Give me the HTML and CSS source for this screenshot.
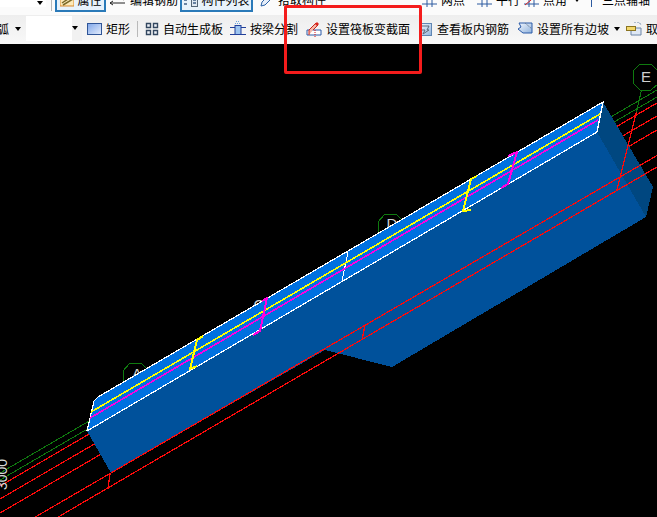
FILE: index.html
```html
<!DOCTYPE html>
<html lang="zh">
<head>
<meta charset="utf-8">
<title>设置筏板变截面</title>
<link rel="stylesheet" href="styles.css">
</head>
<body>
<div class="page">
  <svg class="defs" width="0" height="0" aria-hidden="true">
    <defs>
      <linearGradient id="rectFill" x1="0" y1="0" x2="1" y2="1"><stop offset="0" stop-color="#7ea6ea"/><stop offset="1" stop-color="#e6eefc"/></linearGradient>
      <linearGradient id="sheet" x1="0" y1="0" x2="1" y2="1"><stop offset="0" stop-color="#f4f8fe"/><stop offset="1" stop-color="#8fb2dc"/></linearGradient>
    </defs>
  </svg>
  <div class="toolbar-top">
    <div class="combo-top"><span class="caret"></span></div>
    <span class="sep sep-top"></span>
    <div class="tool tool-btn btn-prop">
      <svg class="ico" width="14" height="14" viewBox="0 0 14 14"><rect x="0" y="1" width="14" height="12" fill="#fde9b8" stroke="#d98a2b"/><path d="M2 10 L11 4 M3 12 L13 6" stroke="#7a6a2a" stroke-width="1.5"/></svg>
      <span>属性</span>
    </div>
    <div class="tool tool-edit">
      <svg class="ico" width="16" height="14" viewBox="0 0 16 14"><path d="M0 10 H15 M3 8 L0 10 L3 12 M6 5 H16 M13 3 L16 5 L13 7" fill="none" stroke="#222"/></svg>
      <span>编辑钢筋</span>
    </div>
    <div class="tool tool-btn btn-list">
      <svg class="ico" width="14" height="14" viewBox="0 0 14 14"><rect x="7.5" y="0.5" width="6" height="13" fill="#dfe8f2" stroke="#567"/><path d="M0 3 H3 M0 7 H3 M0 11 H3 M9 4 H12 M9 7 H12 M9 10 H12" stroke="#3f5f86" stroke-width="1.5"/></svg>
      <span>构件列表</span>
    </div>
    <div class="tool tool-pick">
      <svg class="ico" width="14" height="14" viewBox="0 0 14 14"><path d="M1 13 L2 9 L10 1 L13 4 L5 12 Z" fill="#e7eef8" stroke="#2c62a8"/></svg>
      <span>拾取构件</span>
    </div>
    <div class="tool tool-two">
      <svg class="ico" width="15" height="14" viewBox="0 0 15 14"><path d="M0 5 H15 M0 11 H15 M5 0 V14 M10 0 V14" stroke="#2c5aa0"/><rect x="3" y="0" width="3" height="3" fill="#2a8a2a"/></svg>
      <span>两点</span>
    </div>
    <div class="tool tool-par">
      <svg class="ico" width="15" height="14" viewBox="0 0 15 14"><path d="M0 5 H15 M0 11 H15 M5 0 V14 M10 0 V14" stroke="#2c5aa0"/></svg>
      <span>平行</span>
    </div>
    <div class="tool tool-ang">
      <svg class="ico" width="15" height="14" viewBox="0 0 15 14"><path d="M0 5 H15 M0 11 H15 M5 0 V14 M10 0 V14" stroke="#2c5aa0"/><path d="M1 12 L13 2" stroke="#d01c1c"/></svg>
      <span>点角</span>
    </div>
    <span class="caret caret-top"></span>
    <svg class="ico ico-axis" width="8" height="14" viewBox="0 0 8 14"><path d="M6.5 0 V14" stroke="#2c5aa0"/><rect x="0" y="2" width="3" height="4" fill="#d01c1c"/></svg>
    <div class="tool tool-axis"><span>三点辅轴</span></div>
  </div>
  <div class="toolbar-main">
    <span class="arc">弧</span>
    <span class="caret caret-arc"></span>
    <div class="combo"><span class="caret"></span></div>
    <div class="tool">
      <svg class="ico" width="15" height="12" viewBox="0 0 15 12"><rect x="0.5" y="0.5" width="14" height="11" fill="url(#rectFill)" stroke="#2f5597"/></svg>
      <span>矩形</span>
    </div>
    <span class="sep"></span>
    <div class="tool tool-auto">
      <svg class="ico" width="14" height="14" viewBox="0 0 14 14"><path d="M1.5 1.5 H5.5 V5.5 H1.5 Z M8.5 1.5 H12.5 V5.5 H8.5 Z M1.5 8.5 H5.5 V12.5 H1.5 Z M8.5 8.5 H12.5 V12.5 H8.5 Z" fill="#eef2f8" stroke="#33475f" stroke-width="1.4"/></svg>
      <span>自动生成板</span>
    </div>
    <div class="tool tool-split">
      <svg class="ico" width="16" height="16" viewBox="0 0 16 16"><path d="M0 6.5 H16 M0 13.5 H16" stroke="#22409a"/><rect x="5" y="4.5" width="6" height="9" fill="#9cc4f0" stroke="#22409a"/><path d="M6 0.5 H10 M5 2.5 H11" stroke="#6aa5e0" stroke-dasharray="1 1"/></svg>
      <span>按梁分割</span>
    </div>
    <div class="tool">
      <svg class="ico" width="16" height="16" viewBox="0 0 16 16"><path d="M1 9 H15 V14 H1 Z" fill="#fff" stroke="#2a5aa8"/><path d="M3 14 L3 9 L10 2 L12 4 L7 9" fill="#f4b9a8" stroke="#c9261e"/><path d="M9 3 L11 1 L13 3 L11 5 Z" fill="#d9261e"/><path d="M9 9 V16" stroke="#e01010" stroke-dasharray="1 1"/></svg>
      <span>设置筏板变截面</span>
    </div>
    <div class="tool">
      <svg class="ico" width="15" height="15" viewBox="0 0 15 15"><rect x="1.5" y="1.5" width="12" height="12" fill="url(#sheet)" stroke="#5f86b3"/><path d="M4 4 H11 L9 8 H11 L5 12 L7 8 H4" fill="none" stroke="#5a6a7c"/></svg>
      <span>查看板内钢筋</span>
    </div>
    <div class="tool">
      <svg class="ico" width="16" height="16" viewBox="0 0 16 16"><path d="M2 2 H15 V12 H6 L1 8 L4 6 Z" fill="url(#sheet)" stroke="#2a5aa8"/><path d="M8 2 L15 8" stroke="#6d7f96" stroke-dasharray="2 1"/></svg>
      <span>设置所有边坡</span>
    </div>
    <span class="caret caret-slope"></span>
    <div class="tool tool-last">
      <svg class="ico" width="16" height="14" viewBox="0 0 16 14"><path d="M5 6 H15 V13 H5 Z" fill="#dfe8f4" stroke="#6d86a8"/><rect x="0.5" y="4.5" width="9" height="4" fill="#f3d76a" stroke="#8a7420"/><path d="M8 0 H13 L15 3" fill="none" stroke="#6d86a8" stroke-dasharray="2 1"/></svg>
      <span>取</span>
    </div>
  </div>
  <svg class="canvas" width="657" height="473" viewBox="0 44 657 473" xmlns="http://www.w3.org/2000/svg">
    <g class="axis-green">
      <line x1="0" y1="473" x2="657" y2="90"/>
      <line x1="0" y1="480" x2="657" y2="97"/>
      <line x1="641.5" y1="90" x2="636.5" y2="112"/>
      <polygon points="640,64 651,64 659,72 659,83 651,90 640,90 633,83 633,71"/>
      <polygon points="385,214 396,214 404,222 404,233 396,240 385,240 378,233 378,222"/>
      <polygon points="130,363 141,363 149,371 149,382 141,389 130,389 123,382 123,371"/>
    </g>
    <g class="axis-red">
      <line x1="0" y1="486" x2="657" y2="103"/>
      <line x1="0" y1="499" x2="657" y2="116"/>
      <line x1="0" y1="513" x2="657" y2="130"/>
    </g>
    <text class="axis-label" x="646" y="81.5" text-anchor="middle">E</text>
    <text class="axis-label" x="392" y="229" text-anchor="middle">D</text>
    <text class="axis-label" x="259" y="310" text-anchor="middle">C</text>
    <text class="axis-label" x="137" y="379" text-anchor="middle">A</text>
    <text class="dim-label" transform="translate(7,490) rotate(-90)">3000</text>
    <polygon class="face-side" points="603,102 653,187 646,217 597,132"/>
    <polygon class="face-front" points="87,431 597,132 646,217 392,367 325,350 111,473"/>
    <polygon class="face-top" points="87,431 94,401 98,397 603,102 597,132"/>
    <g class="axis-red">
      <line x1="0" y1="537.5" x2="657" y2="155.5"/>
      <line x1="0" y1="551" x2="657" y2="167"/>
      <line x1="110" y1="474" x2="108" y2="489"/>
      <line x1="365" y1="325" x2="362" y2="340"/>
      <line x1="636.5" y1="112" x2="617" y2="190"/>
    </g>
    <polyline class="edge-white" points="87,431 94,401 98,397 603,102 597,132 87,431"/>
    <polyline class="edge-thin" points="348,252 342,281"/>
    <line class="line-yellow" x1="91" y1="412" x2="600" y2="114"/>
    <line class="line-magenta" x1="90" y1="418" x2="598" y2="120"/>
    <polyline class="cut-yellow" points="203,336 197,340 190,369 197,366"/>
    <polyline class="cut-yellow" points="477,176 471,179 463,211 471,210"/>
    <polyline class="cut-magenta" points="262,301 267,298 260,331 253,335"/>
    <polyline class="cut-magenta" points="508,156 517,152 508,184 501,188"/>
  </svg>
  <div class="annotation"></div>
</div>
</body>
</html>
```
FILE: styles.css
```css
* { box-sizing: border-box; }
html, body { margin: 0; padding: 0; background: #000; }
.page {
  position: relative;
  width: 657px;
  height: 517px;
  overflow: hidden;
  font-family: "Noto Sans CJK SC", "Liberation Sans", sans-serif;
  font-size: 12px;
  color: #000;
}
.defs { position: absolute; }
.toolbar-top {
  display: flex;
  align-items: flex-start;
  height: 15px;
  overflow: hidden;
  background: #fbfbfb;
}
.toolbar-main {
  display: flex;
  align-items: center;
  height: 29px;
  overflow: hidden;
  padding-bottom: 1px;
  background: linear-gradient(#eeeeee, #f8f8f8);
}
.tool {
  display: flex;
  align-items: center;
  gap: 4px;
  flex: none;
  line-height: 16px;
  margin-left: 8px;
  white-space: nowrap;
}
.ico { display: block; flex: none; }
.toolbar-top .tool { height: 20px; margin-top: -8px; padding-bottom: 5px; }
.combo-top {
  display: flex;
  justify-content: flex-end;
  align-items: flex-start;
  width: 46px;
  height: 9px;
  padding: 1px 3px 0 0;
  background: #fff;
  margin-top: -2px;
  flex: none;
}
.combo-top .caret { margin-top: 2px; }
.caret {
  display: block;
  flex: none;
  width: 0;
  height: 0;
  border-left: 3.5px solid transparent;
  border-right: 3.5px solid transparent;
  border-top: 4px solid #000;
}
.sep { display: block; flex: none; width: 1px; height: 16px; background: #b9b9b9; margin-left: 7px; }
.sep-top { margin: -6px 0 0 5px; height: 17px; }
.tool-btn {
  border: 2px solid #2a7ab9;
  background: #e8f2fb;
  padding: 0 3px;
  justify-content: center;
}
.btn-prop { width: 51px; margin-left: 3px; }
.tool-edit { margin-left: 4px; }
.btn-list { width: 73px; margin-left: 2px; }
.tool-pick { margin-left: 7px; }
.tool-pick span { width: 50px; }
.tool-two { margin-left: 94px; }
.tool-two span, .tool-par span, .tool-ang span { width: 26px; }
.tool-par { margin-left: 10px; }
.tool-ang { margin-left: 2px; }
.caret-top { margin: -2px 0 0 5px; }
.ico-axis { margin: -7px 0 0 5px; }
.tool-axis { margin-left: 9px; }
.arc { flex: none; margin-left: -3px; line-height: 16px; }
.caret-arc { margin-left: 6px; }
.combo {
  display: flex;
  justify-content: flex-end;
  align-items: center;
  flex: none;
  width: 56px;
  height: 25px;
  margin: -2px 0 0 5px;
  padding-right: 4px;
  background: linear-gradient(to right, #fff 0 46px, #f1f1f1 46px);
}
.combo + .tool { margin-left: 5px; }
.tool-auto { margin-left: 7px; }
.tool-split { margin-left: 7px; }
.caret-slope { margin-left: 5px; }
.tool-last { margin-left: 6px; }
.canvas { display: block; background: #000; }
.axis-green line, .axis-green polygon { stroke: #0f7a0f; stroke-width: 1; fill: none; shape-rendering: crispEdges; }
.axis-red line { stroke: #ff0a0a; stroke-width: 1.2; shape-rendering: crispEdges; }
.axis-label { font-family: "Liberation Sans", sans-serif; font-size: 15px; fill: #d0d0d0; }
.dim-label { font-family: "Liberation Sans", sans-serif; font-size: 14px; fill: #d8d8d8; }
.face-side { fill: #004780; shape-rendering: crispEdges; }
.face-front { fill: #00519b; shape-rendering: crispEdges; }
.face-top { fill: #0071e0; shape-rendering: crispEdges; }
.edge-white { fill: none; stroke: #fff; stroke-width: 1.2; shape-rendering: crispEdges; }
.edge-thin { fill: none; stroke: #fff; stroke-width: 1; shape-rendering: crispEdges; }
.line-yellow { stroke: #ffff00; stroke-width: 1.6; shape-rendering: crispEdges; }
.line-magenta { stroke: #ff00e0; stroke-width: 1.6; shape-rendering: crispEdges; }
.cut-yellow { fill: none; stroke: #ffff00; stroke-width: 2; shape-rendering: crispEdges; }
.cut-magenta { fill: none; stroke: #ff00e0; stroke-width: 2; shape-rendering: crispEdges; }
.annotation {
  position: absolute;
  left: 284px;
  top: 5px;
  width: 138px;
  height: 69px;
  border: 3px solid #f41c1c;
  border-radius: 2px;
}
```
